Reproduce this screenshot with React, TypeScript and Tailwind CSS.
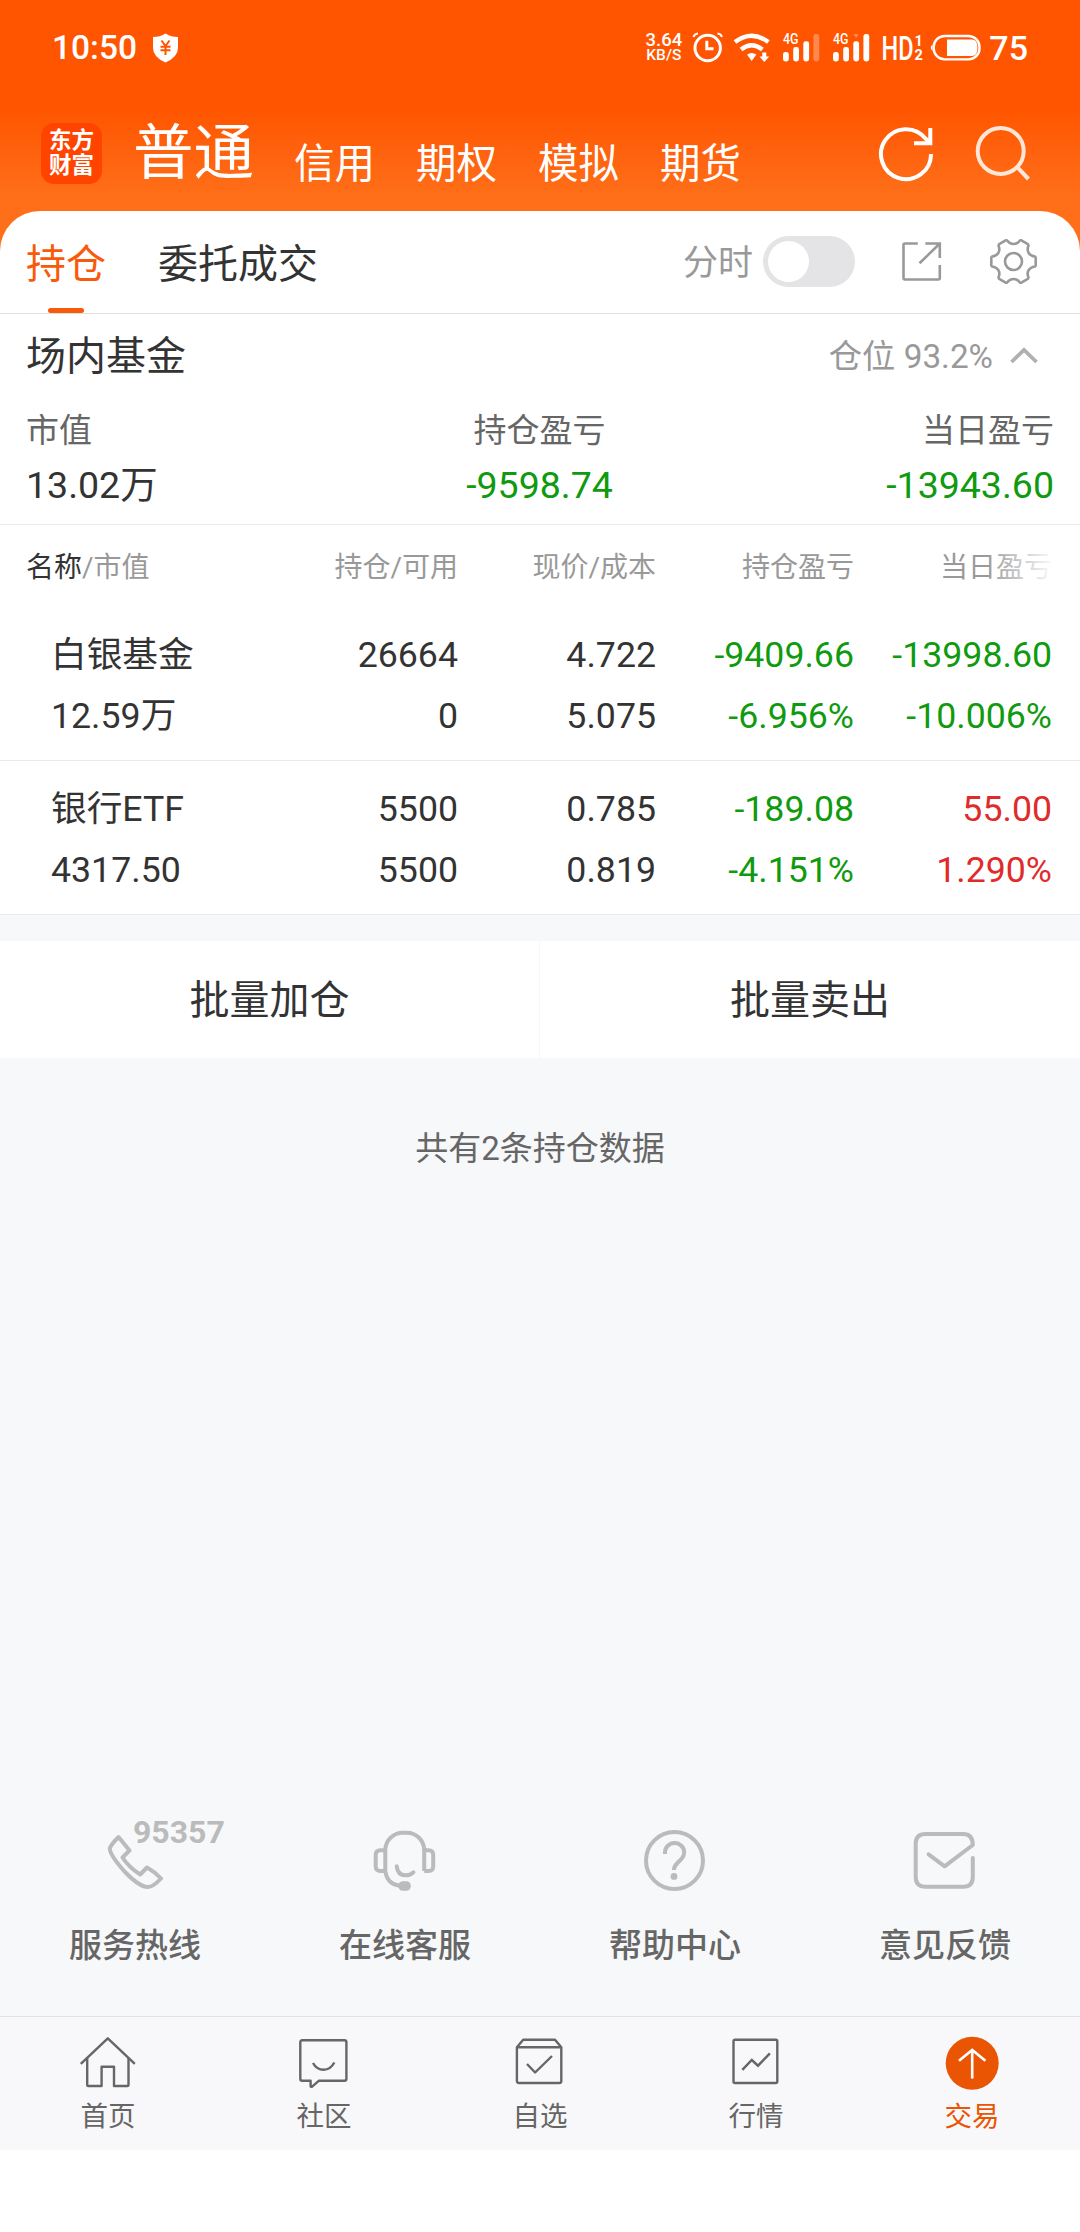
import React from "react";

interface Holding {
  name: string;
  value: string;
  amount: string;
  available: string;
  price: string;
  cost: string;
  profit: string;
  profitRate: string;
  dayProfit: string;
  dayRate: string;
}

const holdings: Holding[] = [
  {
    name: "白银基金",
    value: "12.59万",
    amount: "26664",
    available: "0",
    price: "4.722",
    cost: "5.075",
    profit: "-9409.66",
    profitRate: "-6.956%",
    dayProfit: "-13998.60",
    dayRate: "-10.006%",
  },
  {
    name: "银行ETF",
    value: "4317.50",
    amount: "5500",
    available: "5500",
    price: "0.785",
    cost: "0.819",
    profit: "-189.08",
    profitRate: "-4.151%",
    dayProfit: "55.00",
    dayRate: "1.290%",
  },
];

const trendColor = (value: string) =>
  value.startsWith("-") ? "text-[#0f9a0f]" : "text-[#e02b2b]";

/* Status bar icons */
const ShieldIcon = () => (
  <svg width="27" height="30" viewBox="0 0 27 30" fill="none">
    <path
      d="M13.5 0.5 Q19 4 26 4 V15 Q26 24 13.5 29.5 Q1 24 1 15 V4 Q8 4 13.5 0.5 Z"
      fill="#fff"
    />
    <path
      d="M9.5 7.5 L13.5 13 L17.5 7.5 M8.5 13.7 H18.5 M8.5 17.3 H18.5 M13.5 13 V22"
      stroke="#ff5500"
      strokeWidth="2"
    />
  </svg>
);

const AlarmIcon = () => (
  <svg width="32" height="31" viewBox="0 0 32 31" fill="none" stroke="#fff">
    <circle cx="15.7" cy="16" r="12.7" strokeWidth="3" />
    <path d="M14.8 8.7 V16.7 H21.5" strokeWidth="3" />
    <path d="M1.5 5 Q2.5 2 6 1.6 M25.5 1.6 Q29 2 30 5" strokeWidth="2" />
  </svg>
);

const WifiIcon = () => (
  <svg width="38" height="30" viewBox="0 0 38 30" fill="none" stroke="#fff">
    <path d="M2 9 Q18.7 -3.5 35.4 9" strokeWidth="4.4" />
    <path d="M8 16.5 Q18.7 8 29.4 16.5" strokeWidth="4.4" />
    <path d="M14 21.5 Q18.7 18.5 23.4 21.5 L18.7 28 Z" fill="#fff" stroke="none" />
    <path d="M31.3 19.5 V24" strokeWidth="4" />
    <path d="M26.5 23.5 H36.2 L31.3 29 Z" fill="#fff" stroke="none" />
  </svg>
);

const SignalIcon = ({ full = false }: { full?: boolean }) => (
  <svg width="38" height="30" viewBox="0 0 38 30" fill="#fff">
    <text
      x="1"
      y="11"
      fontSize="14"
      fontWeight="500"
      textLength="15.5"
      lengthAdjust="spacingAndGlyphs"
    >
      4G
    </text>
    <rect x="1" y="19" width="5.8" height="9.5" rx="2.4" />
    <rect x="11.2" y="14" width="5.8" height="14.5" rx="2.4" />
    <rect x="21.3" y="8.3" width="5.8" height="20.2" rx="2.4" />
    <rect x="31.4" y="1" width="5.8" height="27.5" rx="2.4" opacity={full ? 1 : 0.3} />
    {full && <path d="M21.3 1 H26.9 L24.1 5 Z" opacity="0.3" />}
  </svg>
);

const HdIcon = () => (
  <svg width="43" height="42" viewBox="0 -6 43 42" fill="#fff">
    <text
      x="0.5"
      y="26.5"
      fontSize="33"
      fontWeight="500"
      textLength="32"
      lengthAdjust="spacingAndGlyphs"
    >
      HD
    </text>
    <text x="33.5" y="12.5" fontSize="14.5" fontWeight="700">1</text>
    <text x="33.5" y="26.5" fontSize="14.5" fontWeight="700">2</text>
  </svg>
);

const BatteryIcon = () => (
  <svg width="54" height="28" viewBox="0 0 54 28" fill="none">
    <rect x="4.7" y="2" width="45.8" height="23.4" rx="11" stroke="#fff" strokeWidth="2.4" />
    <path d="M18 5.5 H43 Q48.5 5.5 48.5 13.7 Q48.5 22 43 22 H18 Z" fill="#fff" />
    <path d="M3.5 10.5 Q0 13.7 3.5 17 Z" fill="#fff" />
  </svg>
);

/* Header and tab bar icons */
const RefreshIcon = () => (
  <svg width="56" height="58" viewBox="0 0 56 58" fill="none" stroke="#fff" strokeWidth="4">
    <path d="M53 30 A25 25 0 1 1 47.5 14.5 L51.5 18" />
    <path d="M52.3 4 V19.3 H36" />
  </svg>
);

const SearchIcon = () => (
  <svg width="56" height="56" viewBox="0 0 56 56" fill="none" stroke="#ffe6d6" strokeWidth="4">
    <circle cx="25.7" cy="26" r="23" />
    <path d="M42 42 L53.5 54" />
  </svg>
);

const ShareIcon = () => (
  <svg width="42" height="42" viewBox="0 0 42 42" fill="none" stroke="#999" strokeWidth="2.6">
    <path d="M16.8 2.5 H4 Q2.5 2.5 2.5 4 V37 Q2.5 38.5 4 38.5 H37.3 Q38.8 38.5 38.8 37 V24" />
    <path d="M24.3 2.5 H38.8 V17 M38.8 2.5 L18.5 22.3" />
  </svg>
);

const polar = (r: number, deg: number) => {
  const rad = (deg * Math.PI) / 180;
  return `${(24.5 + r * Math.cos(rad)).toFixed(2)} ${(24.5 + r * Math.sin(rad)).toFixed(2)}`;
};

// six flat teeth joined by concave curves
const gearPath =
  [0, 60, 120, 180, 240, 300]
    .map(
      (a, i) =>
        `${i === 0 ? "M" : "L"}${polar(22, a - 13)} Q${polar(23, a - 10)} ${polar(22.3, a - 6)} L${polar(22.3, a + 6)} Q${polar(23, a + 10)} ${polar(22, a + 13)} C${polar(16.5, a + 20)} ${polar(16.5, a + 40)} ${polar(22, a + 47)}`
    )
    .join(" ") + " Z";

const GearIcon = () => (
  <svg width="50" height="50" viewBox="0 0 50 50" fill="none" stroke="#999" strokeWidth="2.6" strokeLinejoin="round">
    <path d={gearPath} />
    <circle cx="24.5" cy="24.5" r="8.5" />
  </svg>
);

/* Service icons */
const PhoneIcon = () => (
  <svg width="56" height="64" viewBox="0 -6 56 64" fill="none" stroke="#bbb" strokeWidth="4" strokeLinejoin="round">
    <path d="M11.5 2 L22.5 15.5 L15.5 22.5 Q21.5 32 33.2 39.5 L40 32.5 Q47.5 36.5 54 43.5 Q46 52 41 52 Q32.5 52 18 37 Q2.8 20 2.8 13.5 Q3.3 10.5 11.5 2 Z" />
  </svg>
);

const HeadsetIcon = () => (
  <svg width="64" height="64" viewBox="0 -1 64 64" fill="none" stroke="#bbb" strokeWidth="4" strokeLinejoin="round">
    <path d="M51.2 41 V20 A17.5 17.5 0 0 0 33.7 2.7 H29.8 A17.5 17.5 0 0 0 12.3 20 V41 Q14 54 26.5 55.7" />
    <path d="M12.3 20.3 H7.5 Q2.7 20.3 2.7 25 V36.5 Q2.7 41 7.5 41 H12.3" />
    <path d="M51.2 20.3 H55.5 Q60.2 20.3 60.2 25 V36.5 Q60.2 41 55.5 41 H51.2" />
    <path d="M23.7 36.3 Q24.5 45.3 32.6 45.3 Q37.5 45.3 40.4 42.3" strokeLinecap="round" />
    <rect x="25.4" y="51.3" width="12.4" height="9.4" rx="4.5" fill="#bbb" stroke="none" />
  </svg>
);

const HelpIcon = () => (
  <svg width="64" height="64" viewBox="0 0 64 64" fill="none" stroke="#bbb" strokeWidth="4">
    <circle cx="31.5" cy="31.5" r="28.5" />
    <path d="M22 25 V23.5 A9.6 9.6 0 0 1 41.2 23.5 Q41.2 27 38.5 29.8 L34 34.5 Q31 37.5 31 41" />
    <circle cx="31" cy="47.4" r="3.4" fill="#bbb" stroke="none" />
  </svg>
);

const MailIcon = () => (
  <svg width="64" height="64" viewBox="0 -2 64 64" fill="none" stroke="#bbb" strokeWidth="4" strokeLinecap="round" strokeLinejoin="round">
    <path d="M59.8 27 V46 Q59.8 55.7 50.5 55.7 H12.5 Q2.7 55.7 2.7 46 V12.5 Q2.7 3 12.5 3 H50 Q59.8 3 59.8 14 L31.6 35.3 L15.6 23.3" />
  </svg>
);

/* Bottom navigation icons */
const HomeIcon = () => (
  <svg width="58" height="54" viewBox="0 0 58 54" fill="none" stroke="#666" strokeWidth="2.4" strokeLinejoin="round">
    <path d="M1.8 27.8 L28.8 2.3 L55.8 27.8" />
    <path d="M8.2 22 V49 Q8.2 50 9.2 50 H22.6 V30.7 H35 V50 H48.5 Q49.5 50 49.5 49 V22" />
  </svg>
);

const CommunityIcon = () => (
  <svg width="52" height="54" viewBox="0 0 52 54" fill="none" stroke="#666" strokeWidth="2.4" strokeLinejoin="round">
    <path d="M4.3 4.3 H46.4 Q48.4 4.3 48.4 6.3 V42.7 Q48.4 44.7 46.4 44.7 H21 L13.8 50.8 Q12.6 51 12.6 50 V44.7 H4.3 Q2.3 44.7 2.3 42.7 V6.3 Q2.3 4.3 4.3 4.3 Z" />
    <path d="M15 27 Q18.5 33.7 25.7 33.7 Q32.5 33.7 36.3 26.5" />
  </svg>
);

const WatchlistIcon = () => (
  <svg width="52" height="54" viewBox="0 0 52 54" fill="none" stroke="#666" strokeWidth="2.4" strokeLinejoin="round">
    <path d="M2.9 11.3 L9.2 3.7 H41 L47.3 11.3 V45 Q47.3 47 45.3 47 H4.9 Q2.9 47 2.9 45 Z M2.9 11.3 H47.3" />
    <path d="M13 28 L21.1 36.5 L38 20" />
  </svg>
);

const MarketIcon = () => (
  <svg width="52" height="54" viewBox="0 0 52 54" fill="none" stroke="#666" strokeWidth="2.4">
    <rect x="3.5" y="3.7" width="43.8" height="43.3" rx="1.5" />
    <path d="M12.3 33.9 L21.8 24 L28 29.7 L39.9 17.3" />
  </svg>
);

const TradeIcon = () => (
  <svg width="56" height="54" viewBox="0 0 56 54" fill="none" stroke="#fff" strokeWidth="2.6">
    <circle cx="28.2" cy="27.2" r="26.5" fill="#ea5504" stroke="none" />
    <path d="M28.2 14 V42.5 M15 24.7 L28.2 14 L41.4 24.7" />
  </svg>
);

const navItems = [
  { label: "首页", icon: <HomeIcon /> },
  { label: "社区", icon: <CommunityIcon /> },
  { label: "自选", icon: <WatchlistIcon /> },
  { label: "行情", icon: <MarketIcon /> },
  { label: "交易", icon: <TradeIcon />, active: true },
];

const services = [
  { label: "服务热线", icon: <PhoneIcon />, hotline: "95357" },
  { label: "在线客服", icon: <HeadsetIcon /> },
  { label: "帮助中心", icon: <HelpIcon /> },
  { label: "意见反馈", icon: <MailIcon /> },
];

const StatusBar = () => (
  <div className="flex h-[95px] items-center pl-[52px] pr-[52px] text-white">
    <span className="text-[33.5px] font-medium leading-none">10:50</span>
    <div className="ml-[15px]">
      <ShieldIcon />
    </div>
    <div className="ml-auto flex items-center">
      <div className="mr-[10px] flex w-[37px] flex-col items-center font-medium">
        <span className="text-[18.5px] leading-[15px]">3.64</span>
        <span className="text-[15.5px] leading-[14px]">KB/S</span>
      </div>
      <AlarmIcon />
      <div className="ml-[9px]">
        <WifiIcon />
      </div>
      <div className="ml-[11px]">
        <SignalIcon />
      </div>
      <div className="ml-[12px]">
        <SignalIcon full />
      </div>
      <div className="ml-[11px]">
        <HdIcon />
      </div>
      <div className="ml-[5px]">
        <BatteryIcon />
      </div>
      <span className="ml-[6px] text-[34px] font-medium leading-none">75</span>
    </div>
  </div>
);

const Header = () => (
  <div className="flex h-[116px] items-center pl-[41px] pr-[49px] text-white">
    <div className="flex h-[61px] w-[61px] flex-col items-center justify-center rounded-[13px] bg-[#ff4400] text-[22.5px] font-bold leading-[25px]">
      <span>东方</span>
      <span>财富</span>
    </div>
    <h1 className="ml-[31px] pt-[3px] text-[60.5px] leading-none">普通</h1>
    <div className="ml-[40px] flex gap-[41px] pt-[21px] text-[40.5px] leading-[40px]">
      <span>信用</span>
      <span>期权</span>
      <span>模拟</span>
      <span>期货</span>
    </div>
    <div className="ml-auto flex items-center gap-[41px]">
      <RefreshIcon />
      <SearchIcon />
    </div>
  </div>
);

const TabBar = () => (
  <div className="flex h-[103px] items-center border-b border-[#e0e0e0] pl-[26px] pr-[41px]">
    <div className="relative flex h-full items-center pt-[5px] text-[40px] text-[#f85a0c]">
      持仓
      <span className="absolute bottom-0 left-[22px] h-[5px] w-[36px] rounded-full bg-[#f85a0c]" />
    </div>
    <span className="ml-[52px] pt-[5px] text-[40px] text-[#333]">委托成交</span>
    <span className="ml-auto pt-[4px] text-[35px] text-[#999]">分时</span>
    <div className="mb-px ml-[10px] flex h-[51px] w-[92px] items-center rounded-full bg-[#e4e4e6] pl-[5px]">
      <div className="h-[41px] w-[41px] rounded-full bg-white" />
    </div>
    <div className="ml-[46px]">
      <ShareIcon />
    </div>
    <div className="ml-[46px]">
      <GearIcon />
    </div>
  </div>
);

const Summary = () => (
  <div className="border-b border-[#ebebeb] px-[26px] pb-[12px]">
    <div className="flex h-[86px] items-center justify-between pr-[16px]">
      <h2 className="text-[40px] text-[#333]">场内基金</h2>
      <div className="flex items-center text-[33.3px] text-[#999]">
        仓位 93.2%
        <svg className="mb-[3px] ml-[17px]" width="28" height="17" viewBox="0 0 28 17" fill="none" stroke="#b0b0b0" strokeWidth="3.8">
          <path d="M1.5 15 L14 2.8 L26.5 15" />
        </svg>
      </div>
    </div>
    <div className="grid grid-cols-3 pt-[4px] leading-[54px]">
      <div>
        <div className="text-[33px] text-[#666]">市值</div>
        <div className="text-[37.5px] text-[#333]">13.02万</div>
      </div>
      <div className="pr-px text-center">
        <div className="text-[33px] text-[#666]">持仓盈亏</div>
        <div className="text-[37.5px] text-[#0f9a0f]">-9598.74</div>
      </div>
      <div className="text-right">
        <div className="text-[33px] text-[#666]">当日盈亏</div>
        <div className="text-[37.5px] text-[#0f9a0f]">-13943.60</div>
      </div>
    </div>
  </div>
);

const HoldingRow: React.FC<{ item: Holding }> = ({ item }) => (
  <div className="grid grid-cols-[232px_repeat(4,198px)] border-b border-[#ebebeb] pb-[13px] pl-[28px] pt-[18px] text-right text-[35.7px] leading-[61px] text-[#333]">
    <div className="pl-[23px] text-left">
      <div>{item.name}</div>
      <div>{item.value}</div>
    </div>
    <div>
      <div>{item.amount}</div>
      <div>{item.available}</div>
    </div>
    <div>
      <div>{item.price}</div>
      <div>{item.cost}</div>
    </div>
    <div className={trendColor(item.profit)}>
      <div>{item.profit}</div>
      <div>{item.profitRate}</div>
    </div>
    <div className={trendColor(item.dayProfit)}>
      <div>{item.dayProfit}</div>
      <div>{item.dayRate}</div>
    </div>
  </div>
);

const HoldingTable = () => (
  <div>
    <div className="relative grid h-[82px] grid-cols-[232px_repeat(4,198px)] items-center pl-[28px] pt-[4px] text-right text-[28px] text-[#999]">
      <div className="-ml-[2px] text-left">
        <span className="text-[#333]">名称</span>/市值
      </div>
      <div>持仓/可用</div>
      <div>现价/成本</div>
      <div>持仓盈亏</div>
      <div>当日盈亏</div>
      <div className="absolute right-[24px] top-0 h-full w-[70px] bg-linear-to-r from-transparent to-white" />
    </div>
    {holdings.map((item) => (
      <HoldingRow key={item.name} item={item} />
    ))}
  </div>
);

const Services = () => (
  <div className="grid grid-cols-4 pb-[50px]">
    {services.map((s) => (
      <div key={s.label} className="flex flex-col items-center">
        <div className="relative">
          {s.icon}
          {s.hotline && (
            <span className="absolute -top-[20px] left-[26px] text-[32px] font-bold leading-[46px] text-[#bbb]">
              {s.hotline}
            </span>
          )}
        </div>
        <span className="mt-[33px] text-[33px] font-medium leading-[40px] text-[#666]">{s.label}</span>
      </div>
    ))}
  </div>
);

const BottomNav = () => (
  <nav className="grid h-[134px] grid-cols-5 border-t border-[#e2e2e4] bg-[#f8f8fb] pt-[19px]">
    {navItems.map((item) => (
      <div key={item.label} className="flex flex-col items-center">
        {item.icon}
        <span
          className={`mt-[9px] text-[27.5px] leading-[36px] ${
            item.active ? "text-[#ea5504]" : "text-[#666]"
          }`}
        >
          {item.label}
        </span>
      </div>
    ))}
  </nav>
);

const App: React.FC = () => {
  return (
    <div className="flex h-[2232px] w-[1080px] flex-col overflow-hidden bg-white pb-[82px] font-[Roboto,'Noto_Sans_CJK_SC',sans-serif]">
      <div className="bg-linear-to-b from-[#ff5500] from-[110px] to-[#ff6e18] to-[195px]">
        <StatusBar />
        <Header />
        <div className="rounded-t-[40px] bg-white leading-[50px]">
          <TabBar />
          <Summary />
          <HoldingTable />
        </div>
      </div>

      <div className="flex flex-1 flex-col bg-[#f7f8fa]">
        <div className="mt-[26px] grid h-[117px] grid-cols-2 bg-white text-center text-[40px] leading-[119px] text-[#333]">
          <div className="border-r border-[#f7f7f7]">批量加仓</div>
          <div>批量卖出</div>
        </div>
        <p className="mt-[71px] text-center text-[33px] leading-[40px] text-[#666]">共有2条持仓数据</p>
        <div className="mt-auto">
          <Services />
        </div>
      </div>

      <BottomNav />
    </div>
  );
};

export default App;
